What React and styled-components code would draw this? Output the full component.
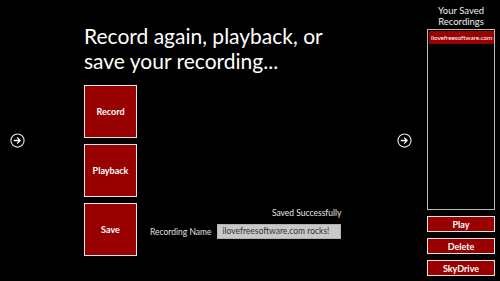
import React from "react";
import styled, { createGlobalStyle } from "styled-components";

const Global = createGlobalStyle`
  html, body { margin: 0; padding: 0; background: #000; }
  body { font-family: "Lato", "Open Sans", sans-serif; color: #fff; }
  * { box-sizing: border-box; }
`;

const Page = styled.div`
  width: 500px;
  height: 281px;
  display: flex;
  background: #000;
  overflow: hidden;
`;

const NavColumn = styled.div`
  width: ${(p) => p.$w}px;
  display: flex;
  align-items: center;
  justify-content: center;
`;

const ArrowCircle = styled.svg`
  width: 15px;
  height: 15px;
  display: block;
`;

const Main = styled.div`
  flex: 1;
  padding: 23px 0 0 49px;
  display: flex;
  flex-direction: column;
`;

const Title = styled.h1`
  margin: 0 0 12px;
  font-weight: 400;
  font-size: 21px;
  line-height: 25px;
  color: #fff;
`;

const Tiles = styled.div`
  display: flex;
  flex-direction: column;
  gap: 6px;
`;

const Tile = styled.button`
  width: 53px;
  height: 53px;
  background: #990000;
  border: 1px solid #e6e6e6;
  color: #fff;
  font-family: inherit;
  font-weight: 700;
  font-size: 9px;
  padding: 0;
  flex-shrink: 0;
`;

const SaveRow = styled.div`
  display: flex;
  align-items: flex-start;
`;

const SaveForm = styled.div`
  margin-left: 13px;
  padding-top: 4px;
  display: flex;
  flex-direction: column;
  align-items: flex-end;
`;

const Status = styled.div`
  font-size: 8.5px;
  line-height: 12px;
  color: #e8e8e8;
  margin-bottom: 5px;
`;

const FieldRow = styled.div`
  display: flex;
  align-items: center;
  gap: 6px;
`;

const Label = styled.span`
  font-size: 8.5px;
  color: #e0e0e0;
`;

const NameInput = styled.div`
  width: 124px;
  height: 15px;
  background: #c8c8c8;
  border: 1px solid #b0b0b0;
  color: #333;
  font-size: 8.5px;
  line-height: 13px;
  padding-left: 4px;
`;

const Sidebar = styled.div`
  width: 82px;
  padding: 5px 5px 5px 9px;
  display: flex;
  flex-direction: column;
`;

const SideTitle = styled.div`
  font-size: 9.5px;
  line-height: 11px;
  text-align: center;
  color: #f0f0f0;
  height: 24px;
`;

const ListBox = styled.div`
  height: 183px;
  border: 1px solid #bdbdbd;
  padding: 1px 0 0 1px;
  overflow: hidden;
`;

const ListItem = styled.div`
  height: 13px;
  background: #990000;
  color: #fff;
  font-size: 6.5px;
  letter-spacing: -0.1px;
  line-height: 13px;
  white-space: nowrap;
  overflow: hidden;
  padding-left: 2px;
`;

const SideButtons = styled.div`
  margin-top: 6px;
  display: flex;
  flex-direction: column;
  gap: 6px;
`;

const SideButton = styled.button`
  height: 16px;
  width: 100%;
  background: #990000;
  border: 1px solid #e6e6e6;
  color: #fff;
  font-family: inherit;
  font-weight: 700;
  font-size: 9px;
  line-height: 13px;
  padding: 0;
`;

const Arrow = () => (
  <ArrowCircle viewBox="0 0 16 16">
    <circle cx="8" cy="8" r="7" fill="none" stroke="#e8e8e8" strokeWidth="1.2" />
    <path d="M4.6 8h6.2M8 5.2L10.8 8 8 10.8" fill="none" stroke="#fff" strokeWidth="1.4" strokeLinecap="round" strokeLinejoin="round" />
  </ArrowCircle>
);

export default function App() {
  return (
    <>
      <Global />
      <Page>
        <NavColumn $w={35}>
          <Arrow />
        </NavColumn>
        <Main>
          <Title>
            Record again, playback, or
            <br />
            save your recording...
          </Title>
          <Tiles>
            <Tile>Record</Tile>
            <Tile>Playback</Tile>
            <SaveRow>
              <Tile>Save</Tile>
              <SaveForm>
                <Status>Saved Successfully</Status>
                <FieldRow>
                  <Label>Recording Name</Label>
                  <NameInput>ilovefreesoftware.com rocks!</NameInput>
                </FieldRow>
              </SaveForm>
            </SaveRow>
          </Tiles>
        </Main>
        <NavColumn $w={28}>
          <Arrow />
        </NavColumn>
        <Sidebar>
          <SideTitle>
            Your Saved
            <br />
            Recordings
          </SideTitle>
          <ListBox>
            <ListItem>ilovefreesoftware.com rocks!</ListItem>
          </ListBox>
          <SideButtons>
            <SideButton>Play</SideButton>
            <SideButton>Delete</SideButton>
            <SideButton>SkyDrive</SideButton>
          </SideButtons>
        </Sidebar>
      </Page>
    </>
  );
}
